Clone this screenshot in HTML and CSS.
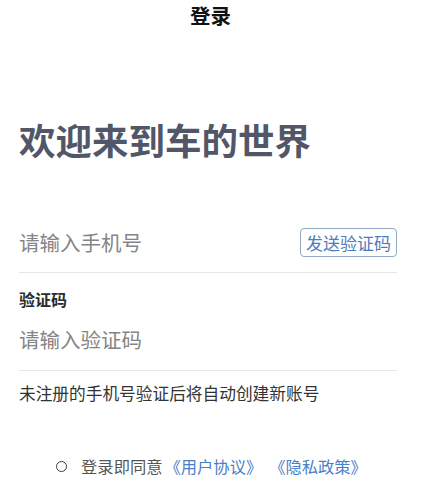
FILE: index.html
```html
<!DOCTYPE html>
<html lang="zh-CN">
<head>
<meta charset="utf-8">
<title>登录</title>
<link rel="stylesheet" href="styles.css">
</head>
<body>
<header class="topbar">登录</header>
<h1 class="welcome">欢迎来到车的世界</h1>
<main class="form">
  <div class="phone-row">
    <span class="placeholder">请输入手机号</span>
    <button class="send-btn">发送验证码</button>
  </div>
  <div class="code-field">
    <div class="label">验证码</div>
    <div class="placeholder code-input">请输入验证码</div>
  </div>
  <p class="notice">未注册的手机号验证后将自动创建新账号</p>
</main>
<footer class="agree">
  <span class="radio"></span>
  <span class="agree-text">登录即同意</span><a class="link">《用户协议》</a><a class="link link-gap">《隐私政策》</a>
</footer>
</body>
</html>
```
FILE: styles.css
```css
html, body {
  margin: 0;
  padding: 0;
  background: #fff;
}
body {
  font-family: "Noto Sans CJK SC", "Noto Sans", sans-serif;
  color: #222;
}
.topbar {
  height: 30px;
  line-height: 30px;
  font-size: 20.5px;
  font-weight: 700;
  text-align: center;
  color: #111;
}
.welcome {
  margin: 88px 0 0;
  padding-left: 19px;
  font-size: 36.5px;
  line-height: 44px;
  font-weight: 700;
  color: #515768;
}
.form {
  padding: 0 24px 0 19px;
}
.phone-row {
  margin-top: 50px;
  height: 60px;
  display: flex;
  align-items: center;
  justify-content: space-between;
  border-bottom: 1px solid #e6e6e6;
}
.placeholder {
  font-size: 20.5px;
  line-height: 30px;
  color: #858585;
}
.send-btn {
  height: 29px;
  padding: 0 5px;
  font-family: inherit;
  font-size: 17px;
  line-height: 27px;
  color: #4b7cc0;
  background: #fff;
  border: 1px solid #93a9c6;
  border-radius: 4px;
}
.code-field {
  padding-bottom: 16px;
  border-bottom: 1px solid #e6e6e6;
}
.label {
  margin-top: 15px;
  font-size: 16px;
  line-height: 22px;
  font-weight: 700;
  color: #2b2b2b;
}
.code-input {
  margin-top: 14px;
}
.notice {
  margin: 11px 0 0;
  font-size: 16.7px;
  line-height: 22px;
  color: #333;
}
.agree {
  margin-top: 51px;
  display: flex;
  align-items: center;
  justify-content: center;
  font-size: 16.3px;
  line-height: 22px;
  padding-left: 2px;
}
.radio {
  width: 9px;
  height: 9px;
  border: 1.8px solid #3a3a3a;
  border-radius: 50%;
  margin-right: 14px;
}
.agree-text {
  color: #555;
  margin-right: 2px;
}
.link {
  color: #4a80c8;
}
.link-gap {
  margin-left: 7px;
}
```
